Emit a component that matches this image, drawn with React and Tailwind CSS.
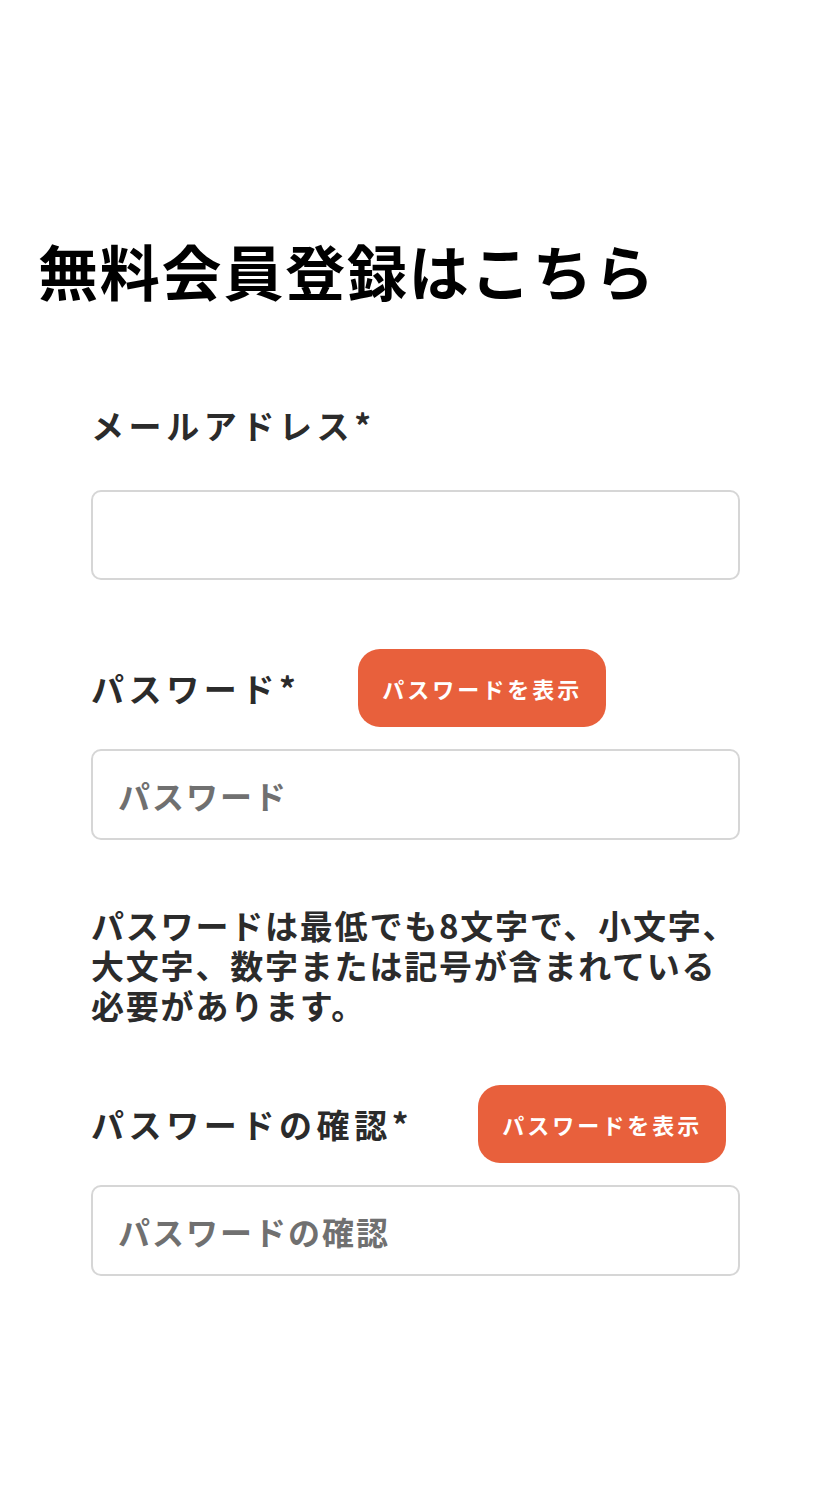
import { useState } from 'react';

const font = { fontFamily: '"Noto Sans CJK JP", "Noto Sans", sans-serif' };

function ShowButton({ onClick, className = '' }) {
  return (
    <button
      type="button"
      onClick={onClick}
      className={`h-[78px] w-[248px] rounded-[22px] bg-[#e8603c] text-white text-[22px] font-bold tracking-[3px] flex items-center justify-center ${className}`}
    >
      パスワードを表示
    </button>
  );
}

export default function App() {
  const [showPw, setShowPw] = useState(false);
  const [showConfirm, setShowConfirm] = useState(false);

  return (
    <div style={font} className="min-h-screen bg-white text-[#222] pt-[225px] pb-[200px]">
      <h1 className="pl-[38px] text-[60px] leading-[90px] font-bold tracking-[1.8px] text-black">
        無料会員登録はこちら
      </h1>

      <form className="px-[91px]">
        <label className="block mt-[90px] text-[33px] leading-[40px] font-bold tracking-[4.6px] text-[#2b2b2b]">
          メールアドレス*
        </label>
        <input
          type="email"
          className="mt-[45px] block w-full h-[90px] rounded-[10px] border-2 border-[#d6d6d6] px-[26px] text-[32px] outline-none"
        />

        <div className="mt-[69px] flex items-center h-[78px]">
          <span className="text-[33px] leading-[40px] font-bold tracking-[4.6px] text-[#2b2b2b]">パスワード*</span>
          <ShowButton className="ml-[58px]" onClick={() => setShowPw(!showPw)} />
        </div>
        <input
          type={showPw ? 'text' : 'password'}
          placeholder="パスワード"
          className="mt-[22px] block w-full h-[91px] rounded-[10px] border-2 border-[#d6d6d6] px-[25px] text-[32px] font-bold tracking-[2px] outline-none placeholder:text-[#707070]"
        />

        <p className="mt-[65px] -mr-[20px] whitespace-nowrap text-[33px] leading-[40px] font-bold tracking-[1.8px] text-[#2b2b2b]">
          パスワードは最低でも8文字で、小文字、<br />
          大文字、数字または記号が含まれている<br />
          必要があります。
        </p>

        <div className="mt-[60px] flex items-center h-[78px]">
          <span className="text-[33px] leading-[40px] font-bold tracking-[4.6px] text-[#2b2b2b]">パスワードの確認*</span>
          <ShowButton className="ml-[65px]" onClick={() => setShowConfirm(!showConfirm)} />
        </div>
        <input
          type={showConfirm ? 'text' : 'password'}
          placeholder="パスワードの確認"
          className="mt-[22px] block w-full h-[91px] rounded-[10px] border-2 border-[#d6d6d6] px-[25px] text-[32px] font-bold tracking-[2px] outline-none placeholder:text-[#707070]"
        />
      </form>
    </div>
  );
}
